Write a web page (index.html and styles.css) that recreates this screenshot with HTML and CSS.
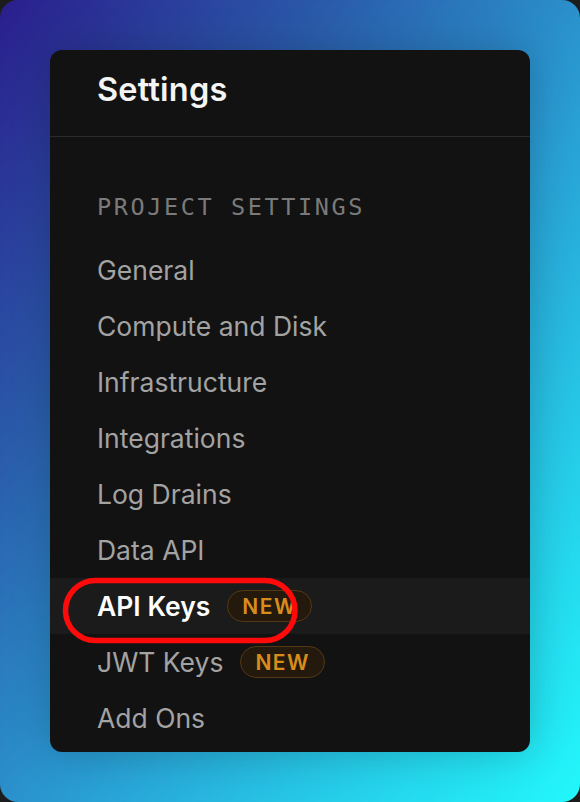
FILE: index.html
```html
<!DOCTYPE html>
<html lang="en">
<head>
<meta charset="utf-8">
<title>Settings</title>
<link rel="stylesheet" href="styles.css">
</head>
<body>
<div class="stage">
  <div class="card">
    <div class="card-header">
      <h1 class="title">Settings</h1>
    </div>
    <div class="divider"></div>
    <nav class="menu">
      <div class="menu-label">PROJECT SETTINGS</div>
      <ul class="menu-list">
        <li class="menu-item">General</li>
        <li class="menu-item">Compute and Disk</li>
        <li class="menu-item">Infrastructure</li>
        <li class="menu-item">Integrations</li>
        <li class="menu-item">Log Drains</li>
        <li class="menu-item">Data API</li>
        <li class="menu-item is-active">API Keys <span class="badge">NEW</span></li>
        <li class="menu-item">JWT Keys <span class="badge">NEW</span></li>
        <li class="menu-item">Add Ons</li>
      </ul>
    </nav>
  </div>
  <svg class="annotation" width="580" height="802" viewBox="0 0 580 802" aria-hidden="true">
    <rect x="65.5" y="580.5" width="229.5" height="60" rx="30" ry="30" fill="none" stroke="#ff0a0a" stroke-width="5.5"/>
  </svg>
</div>
</body>
</html>
```
FILE: styles.css
```css
html {
  background: #1c1c1c;
}
body {
  margin: 0;
  width: 580px;
  height: 802px;
  overflow: hidden;
}
.stage {
  position: relative;
  width: 580px;
  height: 802px;
  box-sizing: border-box;
  padding: 50px;
  border-radius: 18px;
  background: linear-gradient(to bottom right, #2a1e8c 0%, #2a5aaa 28%, #2a90cc 50%, #26c6e6 75%, #22f8fb 100%);
  font-family: Inter, "Noto Sans", sans-serif;
}
.card {
  width: 480px;
  height: 702px;
  background: #121212;
  border-radius: 12px;
  box-shadow: 0 0 40px rgba(0, 0, 0, 0.22);
  overflow: hidden;
}
.card-header {
  height: 86px;
  box-sizing: border-box;
  padding: 20px 47px 0;
}
.title {
  margin: 0;
  font-size: 32.5px;
  line-height: 40px;
  font-weight: 600;
  color: #f4f4f4;
  letter-spacing: 0.2px;
}
.divider {
  height: 1px;
  background: #2c2c2c;
}
.menu {
  padding: 49px 0 6px;
}
.menu-label {
  height: 42px;
  line-height: 42px;
  padding-left: 47px;
  margin-bottom: 14px;
  font-family: "DejaVu Sans Mono", "Liberation Mono", monospace;
  font-size: 23.5px;
  letter-spacing: 2.6px;
  color: #7a7a7a;
}
.menu-list {
  list-style: none;
  margin: 0;
  padding: 0;
}
.menu-item {
  height: 56px;
  display: flex;
  align-items: center;
  padding-left: 47px;
  font-size: 26.5px;
  color: #a3a3a3;
}
.menu-item.is-active {
  background: #1b1b1b;
  color: #ffffff;
  font-weight: 600;
}
.badge {
  display: inline-flex;
  align-items: center;
  height: 32px;
  box-sizing: border-box;
  margin-left: 17px;
  padding: 0 14px;
  border: 1px solid #553813;
  border-radius: 16px;
  background: #231a0d;
  color: #d98c1c;
  font-size: 21px;
  font-weight: 600;
  letter-spacing: 1.5px;
}
.annotation {
  position: absolute;
  left: 0;
  top: 0;
  pointer-events: none;
}
```
